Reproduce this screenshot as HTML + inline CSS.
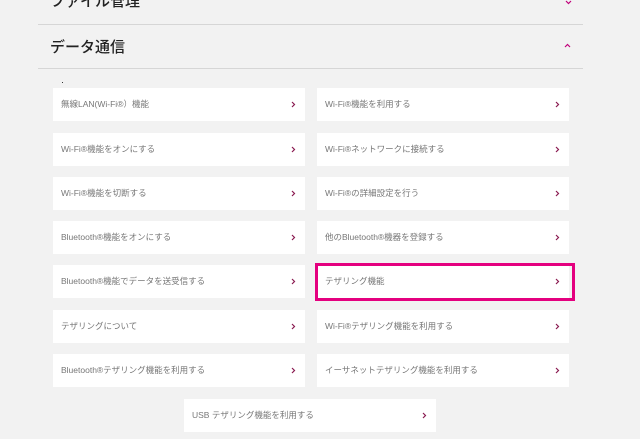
<!DOCTYPE html><html><head><meta charset="utf-8"><style>
body{margin:0;width:640px;height:439px;background:#f2f2f2;position:relative;overflow:hidden;font-family:"Liberation Sans","Noto Sans CJK JP",sans-serif}
.h{position:absolute;left:50px;font-size:15px;color:#222;font-weight:500}
.line{position:absolute;left:38px;width:545px;height:1px;background:#d6d6d6}
.c{position:absolute;width:252px;height:33px;background:#fff;font-size:8.5px;color:#777;line-height:33px;box-sizing:border-box;padding-left:8px}
.c svg{position:absolute;right:9px;top:13px}
.sel{position:absolute;left:315px;top:263px;width:260px;height:38px;border:3px solid #e4007f;box-sizing:border-box}
</style></head><body>
<div class="h" style="top:-10px">ファイル管理</div>
<svg style="position:absolute;left:565px;top:0" width="7" height="5"><path d="M1 1L3.5 3.5L6 1" stroke="#c0007a" fill="none" stroke-width="1.2"/></svg>
<div class="line" style="top:24px"></div>
<div class="h" style="top:36px">データ通信</div>
<svg style="position:absolute;left:564px;top:43px" width="7" height="5"><path d="M1 4L3.5 1.5L6 4" stroke="#c0007a" fill="none" stroke-width="1.2"/></svg>
<div class="line" style="top:68px"></div>
<div style="position:absolute;left:62px;top:82px;width:1px;height:1px;background:#333"></div>
<div class="c" style="left:53px;top:88px">無線LAN(Wi-Fi®）機能<svg width="5" height="7"><path d="M1 1L3.5 3.5L1 6" stroke="#8a1a50" fill="none" stroke-width="1.2"/></svg></div>
<div class="c" style="left:317px;top:88px">Wi-Fi®機能を利用する<svg width="5" height="7"><path d="M1 1L3.5 3.5L1 6" stroke="#8a1a50" fill="none" stroke-width="1.2"/></svg></div>
<div class="c" style="left:53px;top:133px">Wi-Fi®機能をオンにする<svg width="5" height="7"><path d="M1 1L3.5 3.5L1 6" stroke="#8a1a50" fill="none" stroke-width="1.2"/></svg></div>
<div class="c" style="left:317px;top:133px">Wi-Fi®ネットワークに接続する<svg width="5" height="7"><path d="M1 1L3.5 3.5L1 6" stroke="#8a1a50" fill="none" stroke-width="1.2"/></svg></div>
<div class="c" style="left:53px;top:177px">Wi-Fi®機能を切断する<svg width="5" height="7"><path d="M1 1L3.5 3.5L1 6" stroke="#8a1a50" fill="none" stroke-width="1.2"/></svg></div>
<div class="c" style="left:317px;top:177px">Wi-Fi®の詳細設定を行う<svg width="5" height="7"><path d="M1 1L3.5 3.5L1 6" stroke="#8a1a50" fill="none" stroke-width="1.2"/></svg></div>
<div class="c" style="left:53px;top:221px">Bluetooth®機能をオンにする<svg width="5" height="7"><path d="M1 1L3.5 3.5L1 6" stroke="#8a1a50" fill="none" stroke-width="1.2"/></svg></div>
<div class="c" style="left:317px;top:221px">他のBluetooth®機器を登録する<svg width="5" height="7"><path d="M1 1L3.5 3.5L1 6" stroke="#8a1a50" fill="none" stroke-width="1.2"/></svg></div>
<div class="c" style="left:53px;top:265px">Bluetooth®機能でデータを送受信する<svg width="5" height="7"><path d="M1 1L3.5 3.5L1 6" stroke="#8a1a50" fill="none" stroke-width="1.2"/></svg></div>
<div class="c" style="left:317px;top:265px">テザリング機能<svg width="5" height="7"><path d="M1 1L3.5 3.5L1 6" stroke="#8a1a50" fill="none" stroke-width="1.2"/></svg></div>
<div class="c" style="left:53px;top:310px">テザリングについて<svg width="5" height="7"><path d="M1 1L3.5 3.5L1 6" stroke="#8a1a50" fill="none" stroke-width="1.2"/></svg></div>
<div class="c" style="left:317px;top:310px">Wi-Fi®テザリング機能を利用する<svg width="5" height="7"><path d="M1 1L3.5 3.5L1 6" stroke="#8a1a50" fill="none" stroke-width="1.2"/></svg></div>
<div class="c" style="left:53px;top:354px">Bluetooth®テザリング機能を利用する<svg width="5" height="7"><path d="M1 1L3.5 3.5L1 6" stroke="#8a1a50" fill="none" stroke-width="1.2"/></svg></div>
<div class="c" style="left:317px;top:354px">イーサネットテザリング機能を利用する<svg width="5" height="7"><path d="M1 1L3.5 3.5L1 6" stroke="#8a1a50" fill="none" stroke-width="1.2"/></svg></div>
<div class="c" style="left:184px;top:399px">USB テザリング機能を利用する<svg width="5" height="7"><path d="M1 1L3.5 3.5L1 6" stroke="#8a1a50" fill="none" stroke-width="1.2"/></svg></div>
<div class="sel"></div>
</body></html>
